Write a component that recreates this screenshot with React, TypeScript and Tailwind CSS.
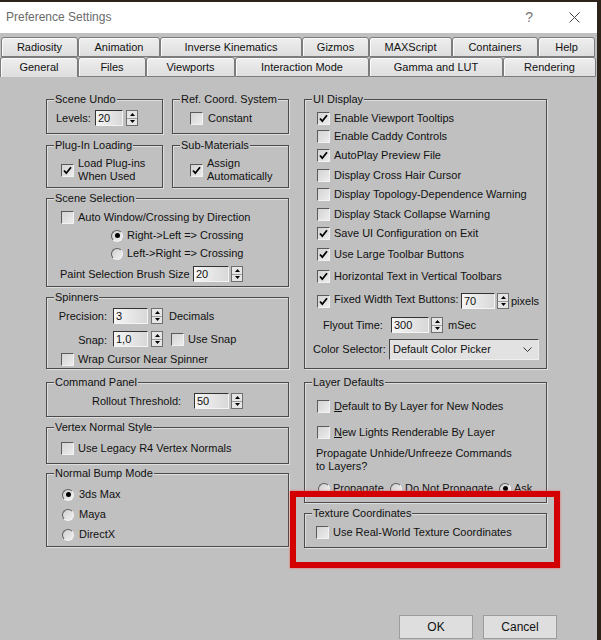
import type { ReactNode } from 'react';

function Check({ checked = false }: { checked?: boolean }) {
  return (
    <span className="inline-flex w-[13px] h-[13px] shrink-0 items-center justify-center border border-t-[#5a5a5a] border-l-[#5a5a5a] border-b-[#f2f2f2] border-r-[#f2f2f2] bg-gradient-to-br from-[#d4d4d4] to-[#ececec]">
      {checked && (
        <svg width="11" height="11" viewBox="0 0 11 11">
          <path d="M2 5.5 L4.3 8.2 L9 2.3" stroke="#000" strokeWidth="1.8" fill="none" />
        </svg>
      )}
    </span>
  );
}

function Radio({ checked = false }: { checked?: boolean }) {
  return (
    <span className="inline-flex w-[12px] h-[12px] shrink-0 items-center justify-center rounded-full border border-t-[#5e5e5e] border-l-[#5e5e5e] border-b-[#f4f4f4] border-r-[#f4f4f4] bg-gradient-to-br from-[#d0d0d0] to-[#f0f0f0]">
      {checked && <span className="w-[5px] h-[5px] rounded-full bg-black" />}
    </span>
  );
}

function Field({ value, className = '' }: { value: string; className?: string }) {
  return (
    <div
      className={`h-[16px] shrink-0 border border-t-[#333] border-l-[#333] border-b-[#f4f4f4] border-r-[#f4f4f4] bg-gradient-to-r from-[#f6f6f6] to-[#d8d8d8] pl-[2px] leading-[14px] ${className}`}
    >
      {value}
    </div>
  );
}

function Spin() {
  return (
    <div className="flex flex-col w-[12px] h-[16px] shrink-0 border border-[#6f6f6f] bg-[#e6e6e6]">
      <div className="flex-1 flex items-center justify-center border-b border-[#9a9a9a]">
        <svg width="5" height="3" viewBox="0 0 5 3">
          <path d="M0 3 L2.5 0 L5 3Z" fill="#000" />
        </svg>
      </div>
      <div className="flex-1 flex items-center justify-center">
        <svg width="5" height="3" viewBox="0 0 5 3">
          <path d="M0 0 L2.5 3 L5 0Z" fill="#000" />
        </svg>
      </div>
    </div>
  );
}

function Group({ label, className = '', children }: { label: string; className?: string; children?: ReactNode }) {
  return (
    <div className={`border border-[#4a4a4a] shadow-[1px_1px_0_#dedede,inset_1px_1px_0_#dedede] ${className}`}>
      <div className="-mt-[7px] ml-[7px] px-[1px] w-fit bg-[#c0c0c0] leading-[13px]">{label}</div>
      {children}
    </div>
  );
}

function CheckRow({ label, checked = false, className = '' }: { label: ReactNode; checked?: boolean; className?: string }) {
  return (
    <div className={`flex items-center h-[13px] ${className}`}>
      <Check checked={checked} />
      <span className="ml-[4px] whitespace-nowrap">{label}</span>
    </div>
  );
}

function Tab({ label, className = '' }: { label: string; className?: string }) {
  return (
    <div
      className={`h-[20px] shrink-0 flex items-center justify-center rounded-t-[3px] border border-[#7c7c7c] bg-gradient-to-b from-[#eeeeee] to-[#dedede] shadow-[inset_1px_1px_0_#fafafa] ${className}`}
    >
      {label}
    </div>
  );
}

export default function App() {
  return (
    <div className="w-[601px] h-[640px] overflow-hidden bg-[#2c241b] relative font-['Liberation_Sans',Arial,sans-serif] text-[11px] leading-[13px] text-[#111]">
      <div className="mt-[2px] w-[597px] h-[638px] bg-[#c0c0c0] flex flex-col">
        {/* Title bar */}
        <div className="h-[31px] bg-white flex items-center pl-[6px] shrink-0">
          <span className="text-[12px] text-[#6b6b6b]">Preference Settings</span>
          <span className="ml-auto text-[14px] text-[#777]">?</span>
          <svg className="ml-[36px] mr-[17px]" width="11" height="11" viewBox="0 0 11 11">
            <path d="M0.5 0.5 L10.5 10.5 M10.5 0.5 L0.5 10.5" stroke="#444" strokeWidth="1" />
          </svg>
        </div>

        {/* Tabs */}
        <div className="mt-[4px] flex pl-[1px]">
          <Tab label="Radiosity" className="w-[77px]" />
          <Tab label="Animation" className="w-[82px]" />
          <Tab label="Inverse Kinematics" className="w-[142px]" />
          <Tab label="Gizmos" className="w-[67px]" />
          <Tab label="MAXScript" className="w-[83px]" />
          <Tab label="Containers" className="w-[86px]" />
          <Tab label="Help" className="w-[57px]" />
        </div>
        <div className="flex">
          <Tab label="General" className="w-[78px] border-b-0" />
          <Tab label="Files" className="w-[68px]" />
          <Tab label="Viewports" className="w-[89px]" />
          <Tab label="Interaction Mode" className="w-[134px]" />
          <Tab label="Gamma and LUT" className="w-[134px]" />
          <Tab label="Rendering" className="w-[93px]" />
        </div>

        {/* Content */}
        <div className="flex h-[538px] pt-[22px] pl-[46px] shrink-0">
          {/* Left column */}
          <div className="w-[243px] flex flex-col">
            <div className="flex">
              <Group label="Scene Undo" className="w-[117px] h-[35px]">
                <div className="mt-[4px] flex items-center pl-[9px]">
                  <span className="w-[39px]">Levels:</span>
                  <Field value="20" className="w-[28px]" />
                  <div className="ml-[3px]">
                    <Spin />
                  </div>
                </div>
              </Group>
              <Group label="Ref. Coord. System" className="ml-[9px] w-[117px] h-[35px]">
                <div className="mt-[4px] h-[16px] flex items-center pl-[17px]">
                  <Check />
                  <span className="ml-[5px]">Constant</span>
                </div>
              </Group>
            </div>

            <div className="flex mt-[11px]">
              <Group label="Plug-In Loading" className="w-[117px] h-[43px]">
                <div className="mt-[5px] flex items-center pl-[14px]">
                  <Check checked />
                  <span className="ml-[4px]">
                    Load Plug-ins
                    <br />
                    When Used
                  </span>
                </div>
              </Group>
              <Group label="Sub-Materials" className="ml-[9px] w-[117px] h-[43px]">
                <div className="mt-[5px] flex items-center pl-[17px]">
                  <Check checked />
                  <span className="ml-[4px]">
                    Assign
                    <br />
                    Automatically
                  </span>
                </div>
              </Group>
            </div>

            <Group label="Scene Selection" className="mt-[10px] h-[89px]">
              <CheckRow label="Auto Window/Crossing by Direction" className="mt-[6px] pl-[14px]" />
              <div className="mt-[5px] flex items-center h-[13px] pl-[64px]">
                <Radio checked />
                <span className="ml-[4px]">Right-&gt;Left =&gt; Crossing</span>
              </div>
              <div className="mt-[5px] flex items-center h-[13px] pl-[64px]">
                <Radio />
                <span className="ml-[4px]">Left-&gt;Right =&gt; Crossing</span>
              </div>
              <div className="mt-[6px] flex items-center pl-[13px]">
                <span className="w-[133px]">Paint Selection Brush Size</span>
                <Field value="20" className="w-[36px]" />
                <div className="ml-[2px]">
                  <Spin />
                </div>
              </div>
            </Group>

            <Group label="Spinners" className="mt-[10px] h-[72px]">
              <div className="mt-[4px] flex items-center">
                <span className="w-[60px] text-right">Precision:</span>
                <Field value="3" className="ml-[6px] w-[35px]" />
                <div className="ml-[3px]">
                  <Spin />
                </div>
                <span className="ml-[6px]">Decimals</span>
              </div>
              <div className="mt-[7px] flex items-center h-[16px]">
                <span className="w-[60px] h-[16px] flex items-end justify-end">Snap:</span>
                <Field value="1,0" className="ml-[6px] w-[35px]" />
                <div className="ml-[3px]">
                  <Spin />
                </div>
                <div className="ml-[8px] flex items-center">
                  <Check />
                  <span className="ml-[4px]">Use Snap</span>
                </div>
              </div>
              <CheckRow label="Wrap Cursor Near Spinner" className="mt-[6px] pl-[14px]" />
            </Group>

            <Group label="Command Panel" className="mt-[13px] h-[35px]">
              <div className="mt-[4px] flex items-center pl-[45px]">
                <span className="w-[102px]">Rollout Threshold:</span>
                <Field value="50" className="w-[35px]" />
                <div className="ml-[2px]">
                  <Spin />
                </div>
              </div>
            </Group>

            <Group label="Vertex Normal Style" className="mt-[10px] h-[37px]">
              <CheckRow label="Use Legacy R4 Vertex Normals" className="mt-[8px] pl-[14px]" />
            </Group>

            <Group label="Normal Bump Mode" className="mt-[9px] h-[74px]">
              {['3ds Max', 'Maya', 'DirectX'].map((m, i) => (
                <div key={m} className={`flex items-center h-[13px] pl-[15px] ${i === 0 ? 'mt-[8px]' : 'mt-[7px]'}`}>
                  <Radio checked={i === 0} />
                  <span className="ml-[5px]">{m}</span>
                </div>
              ))}
            </Group>
          </div>

          {/* Right column */}
          <div className="w-[243px] ml-[15px] flex flex-col">
            <Group label="UI Display" className="h-[270px]">
              <CheckRow label="Enable Viewport Tooltips" checked className="mt-[6px] pl-[12px]" />
              <CheckRow label="Enable Caddy Controls" className="mt-[5px] pl-[12px]" />
              <CheckRow label="AutoPlay Preview File" checked className="mt-[6px] pl-[12px]" />
              <CheckRow label="Display Cross Hair Cursor" className="mt-[7px] pl-[12px]" />
              <CheckRow label="Display Topology-Dependence Warning" className="mt-[6px] pl-[12px]" />
              <CheckRow label="Display Stack Collapse Warning" className="mt-[7px] pl-[12px]" />
              <CheckRow label="Save UI Configuration on Exit" checked className="mt-[6px] pl-[12px]" />
              <CheckRow label="Use Large Toolbar Buttons" checked className="mt-[8px] pl-[12px]" />
              <CheckRow label="Horizontal Text in Vertical Toolbars" checked className="mt-[9px] pl-[12px]" />
              <div className="mt-[10px] flex items-center pl-[12px]">
                <Check checked />
                <span className="ml-[4px] w-[127px] whitespace-nowrap -mt-[3px]">Fixed Width Text Buttons:</span>
                <Field value="70" className="w-[34px]" />
                <div className="ml-[2px]">
                  <Spin />
                </div>
                <span className="ml-[2px]">pixels</span>
              </div>
              <div className="mt-[8px] flex items-center pl-[18px]">
                <span className="w-[68px]">Flyout Time:</span>
                <Field value="300" className="w-[38px]" />
                <div className="ml-[2px]">
                  <Spin />
                </div>
                <span className="ml-[5px]">mSec</span>
              </div>
              <div className="mt-[6px] flex items-center pl-[8px]">
                <span className="w-[76px]">Color Selector:</span>
                <div className="w-[150px] h-[21px] flex items-center pl-[3px] pr-[6px] border border-t-[#444] border-l-[#444] border-b-[#eeeeee] border-r-[#eeeeee] bg-[#e2e2e2]">
                  <span>Default Color Picker</span>
                  <svg className="ml-auto" width="9" height="5" viewBox="0 0 9 5">
                    <path d="M0.5 0.5 L4.5 4.5 L8.5 0.5" stroke="#333" strokeWidth="1" fill="none" />
                  </svg>
                </div>
              </div>
            </Group>

            <Group label="Layer Defaults" className="mt-[13px] h-[121px]">
              <CheckRow
                label={
                  <>
                    <span className="underline">D</span>efault to By Layer for New Nodes
                  </>
                }
                className="mt-[11px] pl-[12px]"
              />
              <CheckRow
                label={
                  <>
                    <span className="underline">N</span>ew Lights Renderable By Layer
                  </>
                }
                className="mt-[13px] pl-[12px]"
              />
              <div className="mt-[8px] pl-[11px]">
                Propagate Unhide/Unfreeze Commands
                <br />
                to Layers?
              </div>
              <div className="mt-[9px] flex items-center h-[13px] pl-[13px]">
                <div className="w-[72px] flex items-center">
                  <Radio />
                  <span className="ml-[3px]">Propagate</span>
                </div>
                <div className="w-[109px] flex items-center">
                  <Radio />
                  <span className="ml-[3px]">Do Not Propagate</span>
                </div>
                <div className="flex items-center">
                  <Radio checked />
                  <span className="ml-[3px]">Ask</span>
                </div>
              </div>
            </Group>

            <Group label="Texture Coordinates" className="mt-[10px] h-[35px]">
              <CheckRow label="Use Real-World Texture Coordinates" className="mt-[6px] pl-[11px]" />
            </Group>
          </div>
        </div>

        {/* Buttons */}
        <div className="flex justify-end pr-[40px]">
          <button className="w-[74px] h-[24px] border border-[#9c9c9c] bg-[#dedede] text-[12px]">OK</button>
          <button className="ml-[10px] w-[74px] h-[24px] border border-[#9c9c9c] bg-[#dedede] text-[12px]">Cancel</button>
        </div>
      </div>

      {/* Red annotation box */}
      <div className="absolute left-[290px] top-[491px] w-[270px] h-[77px] border-[6px] border-[#d20000] shadow-[0_0_2px_#ff5a5a]" />
    </div>
  );
}
